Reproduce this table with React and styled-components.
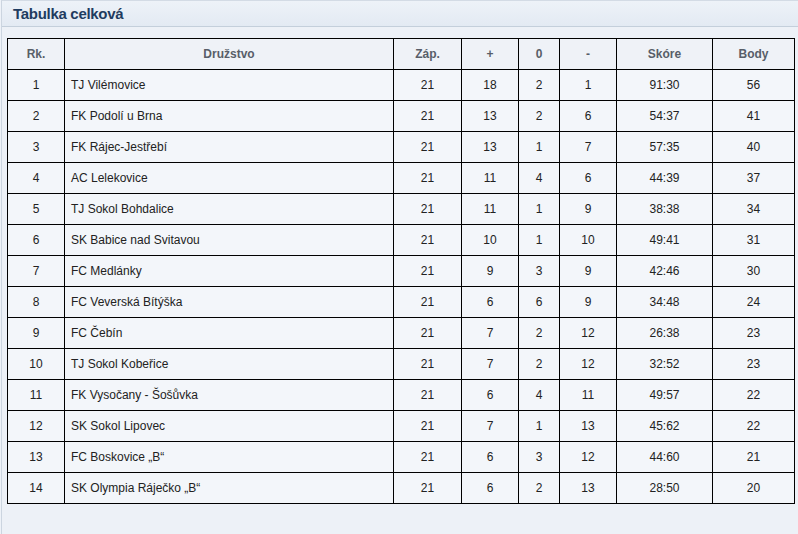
import React from "react";
import styled, { createGlobalStyle } from "styled-components";

const rows = [
  [1, "TJ Vilémovice", 21, 18, 2, 1, "91:30", 56],
  [2, "FK Podolí u Brna", 21, 13, 2, 6, "54:37", 41],
  [3, "FK Rájec-Jestřebí", 21, 13, 1, 7, "57:35", 40],
  [4, "AC Lelekovice", 21, 11, 4, 6, "44:39", 37],
  [5, "TJ Sokol Bohdalice", 21, 11, 1, 9, "38:38", 34],
  [6, "SK Babice nad Svitavou", 21, 10, 1, 10, "49:41", 31],
  [7, "FC Medlánky", 21, 9, 3, 9, "42:46", 30],
  [8, "FC Veverská Bítýška", 21, 6, 6, 9, "34:48", 24],
  [9, "FC Čebín", 21, 7, 2, 12, "26:38", 23],
  [10, "TJ Sokol Kobeřice", 21, 7, 2, 12, "32:52", 23],
  [11, "FK Vysočany - Šošůvka", 21, 6, 4, 11, "49:57", 22],
  [12, "SK Sokol Lipovec", 21, 7, 1, 13, "45:62", 22],
  [13, "FC Boskovice „B“", 21, 6, 3, 12, "44:60", 21],
  [14, "SK Olympia Ráječko „B“", 21, 6, 2, 13, "28:50", 20],
];

const columns = [
  { label: "Rk.", width: 57 },
  { label: "Družstvo", width: 329 },
  { label: "Záp.", width: 68 },
  { label: "+", width: 57 },
  { label: "0", width: 41 },
  { label: "-", width: 57 },
  { label: "Skóre", width: 96 },
  { label: "Body", width: 82 },
];

const App = () => {
  return (
    <>
      <GlobalStyle />
      <Panel>
        <PanelHeader>
          <Title>Tabulka celková</Title>
        </PanelHeader>
        <Body>
          <Table>
            <colgroup>
              {columns.map((c) => (
                <col key={c.label} style={{ width: c.width }} />
              ))}
            </colgroup>
            <thead>
              <tr>
                {columns.map((c) => (
                  <Th key={c.label}>{c.label}</Th>
                ))}
              </tr>
            </thead>
            <tbody>
              {rows.map((r) => (
                <tr key={r[0]}>
                  {r.map((v, i) => (
                    <Td key={i} $left={i === 1}>
                      {v}
                    </Td>
                  ))}
                </tr>
              ))}
            </tbody>
          </Table>
        </Body>
      </Panel>
    </>
  );
};

const GlobalStyle = createGlobalStyle`
  body {
    margin: 0;
    background: #eef2f8;
    font-family: "Liberation Sans", Arial, sans-serif;
  }
`;

const Panel = styled.div`
  margin-left: 1px;
  width: 820px;
  min-height: 534px;
  border-left: 1px solid #ccd5e0;
  border-top: 1px solid #d3dbe5;
  background: #edf1f7;
  box-sizing: border-box;
`;

const PanelHeader = styled.div`
  height: 25px;
  border-bottom: 1px solid #c4cfdb;
  background: linear-gradient(#edf2f8, #e3eaf3);
  display: flex;
  align-items: center;
  padding-left: 11px;
`;

const Title = styled.h2`
  margin: 0;
  font-size: 15px;
  font-weight: bold;
  color: #1f3c60;
  letter-spacing: -0.3px;
`;

const Body = styled.div`
  padding: 11px 0 0 5px;
`;

const Table = styled.table`
  border-collapse: collapse;
  table-layout: fixed;
  width: 787px;
  border: 1px solid #000;
`;

const Th = styled.th`
  height: 30px;
  padding: 0;
  border: 1px solid #000;
  background: #eff2f7;
  font-size: 12px;
  font-weight: bold;
  color: #585e68;
  text-align: center;
`;

const Td = styled.td`
  height: 30px;
  padding: ${(p) => (p.$left ? "0 6px" : "0")};
  border: 1px solid #000;
  background: #f3f6fa;
  font-size: 12px;
  color: #222;
  text-align: ${(p) => (p.$left ? "left" : "center")};
`;

export default App;
